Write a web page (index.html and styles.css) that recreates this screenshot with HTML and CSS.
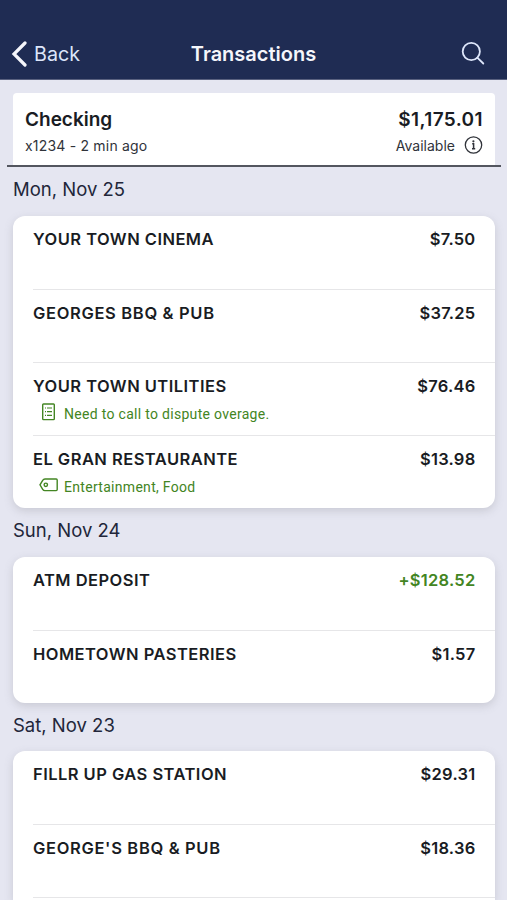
FILE: index.html
```html
<!DOCTYPE html>
<html lang="en">
<head>
<meta charset="utf-8">
<title>Transactions</title>
<link rel="stylesheet" href="styles.css">
</head>
<body>
<header class="nav">
  <div class="back"><svg width="16" height="26" viewBox="0 0 16 26"><path d="M14 2L3 13l11 11" fill="none" stroke="currentColor" stroke-width="3.2" stroke-linecap="round"/></svg><span>Back</span></div>
  <h1>Transactions</h1>
  <svg class="search" width="24" height="24" viewBox="0 0 24 24" fill="none" stroke="currentColor" stroke-width="1.8" stroke-linecap="round"><circle cx="10.3" cy="9.5" r="8.6"/><path d="M16.3 15.700l6 5.8"/></svg>
</header>
<main>
  <section class="account">
    <div class="account-body">
      <div class="line main-line"><span>Checking</span><span class="balance">$1,175.01</span></div>
      <div class="line sub-line"><span class="number">x1234 - 2 min ago</span><span class="available">Available <svg width="19" height="19" viewBox="0 0 19 19" fill="none" stroke="currentColor" stroke-width="1.3"><circle cx="9.5" cy="9" r="8.2"/><path d="M8.200 7.800h1.400v4.9M8 12.700h3.2" stroke-width="1.5"/><circle cx="9.4" cy="5.3" r="1.1" fill="currentColor" stroke="none"/></svg></span></div>
    </div>
  </section>
  <h2>Mon, Nov 25</h2>
  <ul class="card">
    <li><div class="line"><span class="payee">YOUR TOWN CINEMA</span><span class="amount">$7.50</span></div></li>
    <li><div class="line"><span class="payee wide">GEORGES BBQ &amp; PUB</span><span class="amount">$37.25</span></div></li>
    <li><div class="line"><span class="payee">YOUR TOWN UTILITIES</span><span class="amount">$76.46</span></div>
      <div class="note"><svg width="20" height="18" viewBox="0 0 20 18" fill="none" stroke="currentColor" stroke-width="1.4"><rect x="3.7" y="1" width="11.6" height="15.6" rx=".8"/><path d="M6 5h1M8 5h5M6 8.7h1M8 8.7h5M6 12.4h1M8 12.4h5" stroke-width="1.2"/></svg><span>Need to call to dispute overage.</span></div></li>
    <li><div class="line"><span class="payee">EL GRAN RESTAURANTE</span><span class="amount">$13.98</span></div>
      <div class="note"><svg width="20" height="18" viewBox="0 0 20 18" fill="none" stroke="currentColor" stroke-width="1.4"><path d="M6 3h11.2q1 0 1 1v9.6q0 1-1 1H6Q4.5 14.6 3.7 13.3L1 8.8 3.7 4.3Q4.5 3 6 3z"/><circle cx="6.8" cy="8.8" r="1.7"/></svg><span>Entertainment, Food</span></div></li>
  </ul>
  <h2>Sun, Nov 24</h2>
  <ul class="card">
    <li><div class="line"><span class="payee">ATM DEPOSIT</span><span class="amount credit">+$128.52</span></div></li>
    <li><div class="line"><span class="payee">HOMETOWN PASTERIES</span><span class="amount">$1.57</span></div></li>
  </ul>
  <h2>Sat, Nov 23</h2>
  <ul class="card card-open">
    <li><div class="line"><span class="payee">FILLR UP GAS STATION</span><span class="amount">$29.31</span></div></li>
    <li><div class="line"><span class="payee wide">GEORGE'S BBQ &amp; PUB</span><span class="amount">$18.36</span></div></li>
    <li></li>
  </ul>
</main>
</body>
</html>
```
FILE: styles.css
```css
* { box-sizing: border-box; }
body { margin: 0; height: 900px; overflow: hidden; background: #e5e6f1; color: #191c23; font-family: Inter, sans-serif; }
h1, h2, ul { margin: 0; padding: 0; }
svg { display: block; flex: none; }
.nav { height: 80px; padding: 29px 22px 0; background: #1f2c53; color: #f5f6fb; border-bottom: 1px solid #59617f; display: grid; grid-template-columns: 1fr auto 1fr; align-items: center; }
.back { display: flex; align-items: center; gap: 7px; margin-left: -11px; font-size: 19.7px; }
.back span { color: #dde6fa; }
h1 { font-size: 20px; font-weight: 600; }
.search { justify-self: end; color: #dde6fa; }
main { height: 820px; overflow: hidden; padding: 13px 12px 0 13px; }
.account { margin: 0 -6px; padding: 0 6px; border-bottom: 2px solid #53565f; }
.account-body { height: 72px; padding: 11px 12px 0; background: #fff; border-radius: 4px 4px 0 0; }
.line { display: flex; justify-content: space-between; align-items: center; }
.main-line { height: 30px; font-size: 19px; font-weight: 600; }
.balance { letter-spacing: .4px; }
.sub-line { height: 22px; font-size: 14px; color: #30333a; }
.number { letter-spacing: .2px; }
.available { display: flex; align-items: center; gap: 9px; }
h2 { height: 48.6px; line-height: 45px; font-size: 18.5px; font-weight: 400; color: #22263a; }
.account + h2 { height: 49px; }
.card { list-style: none; background: #fff; border-radius: 12px; padding-left: 20px; box-shadow: 0 3px 9px #77778040; }
.card-open { border-radius: 12px 12px 0 0; }
.card li { height: 73px; padding: 10px 20px 0 0; }
.card li + li { border-top: 1px solid #e6e6e8; }
.card-open li:last-child { height: 3px; padding: 0; }
.card .line { height: 26px; font-size: 16.5px; font-weight: 600; }
.payee { letter-spacing: .46px; }
.payee.wide { letter-spacing: .66px; }
.amount { letter-spacing: .25px; margin-right: -.5px; }
.note { display: flex; align-items: center; height: 30px; gap: 5px; padding-left: 6px; color: #438523; font: 14px Roboto, sans-serif; letter-spacing: .3px; }
.note svg { margin-bottom: 5px; }
.amount.credit { color: #438523; }
```
